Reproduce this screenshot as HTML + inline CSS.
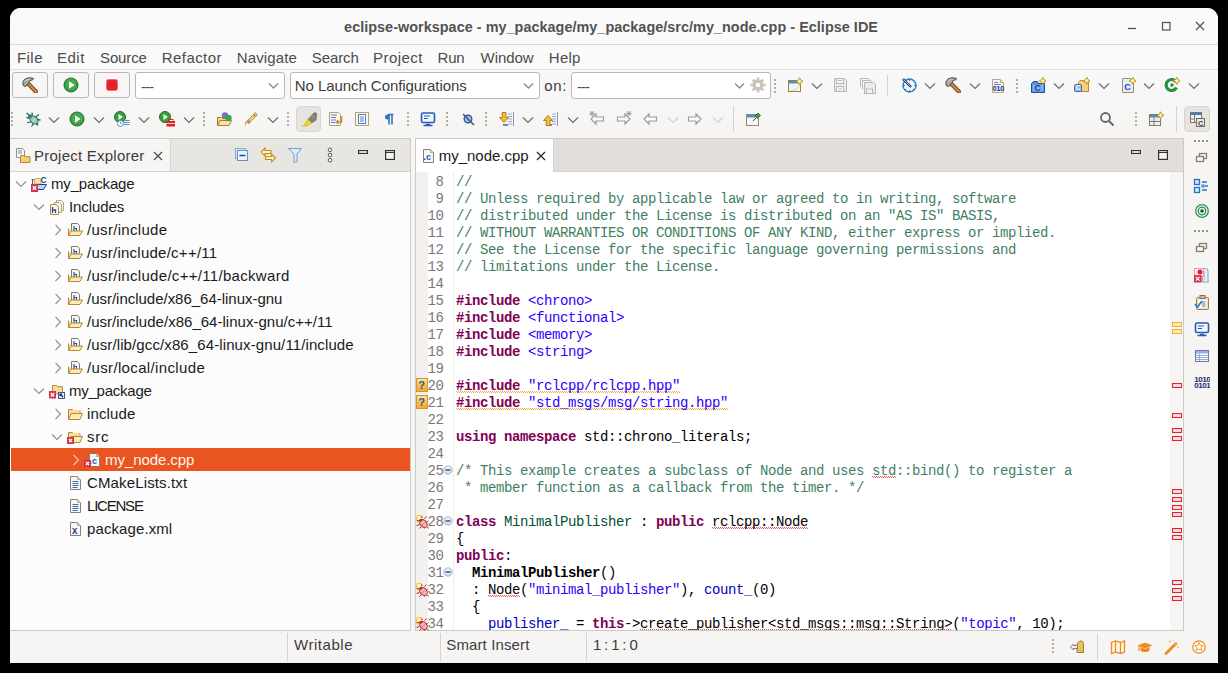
<!DOCTYPE html><html><head><meta charset="utf-8"><style>
*{box-sizing:border-box;margin:0;padding:0}
html,body{width:1228px;height:673px;overflow:hidden;background:#000}
body{position:relative;font-family:"Liberation Sans",sans-serif;}
.a{position:absolute}
.t{position:absolute;white-space:pre;line-height:1}
.win{position:absolute;left:10px;top:8px;width:1208px;height:655px;background:#f6f5f4;border-radius:11px 11px 0 0;overflow:hidden}
.menu{font-size:15px;color:#4c4c4c}
.code{font-family:"Liberation Mono",monospace;font-size:14px;letter-spacing:-0.4px}
.ln{font-family:"Liberation Mono",monospace;font-size:14px;letter-spacing:-0.4px;color:#787878;text-align:right;width:40px}
.c{color:#3f7f5f}.k{color:#7f0055;font-weight:bold}.s{color:#2a00ff}.f{color:#0000c0}.cl{color:#005032}
.sq{background-image:repeating-linear-gradient(90deg,#ec5a5a 0 1px,transparent 1px 2px),repeating-linear-gradient(90deg,transparent 0 1px,#ec5a5a 1px 2px);background-size:100% 1px,100% 1px;background-position:0 13px,0 14px;background-repeat:no-repeat}
.sqy{background-image:repeating-linear-gradient(90deg,#f4b040 0 1px,transparent 1px 2px),repeating-linear-gradient(90deg,transparent 0 1px,#f4b040 1px 2px);background-size:100% 1px,100% 1px;background-position:0 13px,0 14px;background-repeat:no-repeat}
.tree{font-size:15px;color:#1a1a1a}
.btn{position:absolute;border:1px solid #b8b8b8;border-radius:3px;background:#f8f7f6}
.combo{position:absolute;border:1px solid #b8b8b8;border-radius:3px;background:#fff}
.chev{position:absolute;width:7px;height:7px;border-right:1.3px solid #707070;border-bottom:1.3px solid #707070;transform:rotate(45deg)}
.dots{position:absolute;width:2px;height:14px;background:repeating-linear-gradient(#b8ab98 0 2px,transparent 2px 4px)}
.vsep{position:absolute;width:1px;background:#d6d3cf}
</style></head><body>
<div class="win"></div>
<div class="a" style="left:10px;top:8px;width:1208px;height:36px;background:#fafafa;border-radius:11px 11px 0 0"></div>
<div class="a" style="left:10px;top:44px;width:1208px;height:1px;background:#d9d9d9"></div>
<div class="t" style="left:344.1px;top:20px;font-size:14.4px;font-weight:bold;color:#525252;letter-spacing:0.039px">eclipse-workspace - my_package/my_package/src/my_node.cpp - Eclipse IDE</div>
<div class="a" style="left:10px;top:45px;width:1208px;height:24px;background:#fafafa"></div>
<div class="a" style="left:10px;top:69px;width:1208px;height:1px;background:#e2e0dd"></div>
<div class="t menu" style="left:17px;top:50px;letter-spacing:0.433px">File</div>
<div class="t menu" style="left:57.1px;top:50px;letter-spacing:0.467px">Edit</div>
<div class="t menu" style="left:100.1px;top:50px;letter-spacing:-0.160px">Source</div>
<div class="t menu" style="left:161.8px;top:50px;letter-spacing:0.414px">Refactor</div>
<div class="t menu" style="left:236.8px;top:50px;letter-spacing:0.129px">Navigate</div>
<div class="t menu" style="left:311.8px;top:50px;letter-spacing:-0.100px">Search</div>
<div class="t menu" style="left:373px;top:50px;letter-spacing:0.450px">Project</div>
<div class="t menu" style="left:437.6px;top:50px;letter-spacing:-0.300px">Run</div>
<div class="t menu" style="left:480.6px;top:50px;letter-spacing:-0.060px">Window</div>
<div class="t menu" style="left:548.8px;top:50px;letter-spacing:0.267px">Help</div>
<div class="a" style="left:10px;top:70px;width:1208px;height:68px;background:linear-gradient(#f8f8f8,#f6f5f4)"></div>
<div class="btn" style="left:12px;top:72px;width:36px;height:26px"></div>
<div class="btn" style="left:53px;top:72px;width:36px;height:26px"></div>
<div class="btn" style="left:94px;top:72px;width:36px;height:26px"></div>
<svg class="a" style="left:21.5px;top:76.5px" width="16" height="16" viewBox="0 0 16 16"><path d="M6 6.5l7.8 8" stroke="#7a4a18" stroke-width="4.2" stroke-linecap="round"/><path d="M6 6.5l7.8 8" stroke="#c48a4a" stroke-width="2.4" stroke-linecap="round"/><path d="M0.8 5.5C1.3 2.5 4.3 0.8 8 0.8L11.5 1.4L10.5 3L8.2 3.4L7 5.6L3.6 9.6L1.2 8.6Z" fill="#a8a8a8" stroke="#4a4a4a" stroke-width="1"/><path d="M3 4.5C4 3 6 2.2 8 2.2" fill="none" stroke="#d8d8d8" stroke-width="0.9"/></svg>
<svg class="a" style="left:63.0px;top:77.0px" width="16" height="16" viewBox="0 0 16 16"><circle cx="8" cy="8" r="7.0" fill="#3aa040" stroke="#1f6a28" stroke-width="1"/><circle cx="8" cy="7" r="5.5" fill="#4cb050" opacity="0.6"/><path d="M6 4.2v7.6l5.6-3.8z" fill="#fff"/></svg>
<svg class="a" style="left:104.0px;top:77.0px" width="16" height="16" viewBox="0 0 16 16"><rect x="2.5" y="2.5" width="11" height="11" rx="2" fill="#e8202a" stroke="#f07080" stroke-width="1"/></svg>
<div class="combo" style="left:135px;top:72px;width:150px;height:27px"></div>
<div class="t" style="left:141px;top:79px;font-size:15px;color:#4a4a4a;letter-spacing:-1px">---</div>
<svg class="a" style="left:267.5px;top:81.5px" width="11" height="8" viewBox="0 0 11 8"><polyline points="1,1.5 5.5,6.0 10,1.5" fill="none" stroke="#8a8a8a" stroke-width="1.3"/></svg>
<div class="combo" style="left:290px;top:72px;width:250px;height:27px"></div>
<div class="t" style="left:294.8px;top:78px;font-size:15px;color:#3c3c3c;letter-spacing:-0.065px">No Launch Configurations</div>
<svg class="a" style="left:522.5px;top:81.5px" width="11" height="8" viewBox="0 0 11 8"><polyline points="1,1.5 5.5,6.0 10,1.5" fill="none" stroke="#8a8a8a" stroke-width="1.3"/></svg>
<div class="t" style="left:544.2px;top:78px;font-size:15px;color:#3c3c3c;letter-spacing:0.65px">on:</div>
<div class="combo" style="left:571px;top:72px;width:200px;height:27px"></div>
<div class="t" style="left:577px;top:79px;font-size:15px;color:#4a4a4a;letter-spacing:-1px">---</div>
<svg class="a" style="left:734.0px;top:81.5px" width="11" height="8" viewBox="0 0 11 8"><polyline points="1,1.5 5.5,6.0 10,1.5" fill="none" stroke="#8a8a8a" stroke-width="1.3"/></svg>
<svg class="a" style="left:749.5px;top:77.0px" width="16" height="16" viewBox="0 0 16 16"><circle cx="8" cy="8" r="5.5" fill="#c8c4b8"/><path d="M8 0.5v15M0.5 8h15M2.7 2.7l10.6 10.6M13.3 2.7l-10.6 10.6" stroke="#c8c4b8" stroke-width="2.6"/><circle cx="8" cy="8" r="2.3" fill="#fff"/></svg>
<div class="dots" style="left:774px;top:79px"></div>
<svg class="a" style="left:786.5px;top:77.0px" width="16" height="16" viewBox="0 0 16 16"><rect x="1.5" y="3.5" width="12" height="11" fill="#eef6fc" stroke="#9a8040"/><rect x="2" y="4" width="11" height="2.5" fill="#4a90d0"/><path d="M4 13.5c5 0 8-3 9.5-8" fill="none" stroke="#f0e0a0" stroke-width="1.2"/><path d="M12.5 0.8l1.2 2.3 2.3 1.2-2.3 1.2-1.2 2.3-1.2-2.3-2.3-1.2 2.3-1.2z" fill="#fff3b0" stroke="#c09020" stroke-width="1"/></svg>
<svg class="a" style="left:811.0px;top:81.5px" width="12" height="8" viewBox="0 0 12 8"><polyline points="1,1.5 6.0,6.5 11,1.5" fill="none" stroke="#6e6e6e" stroke-width="1.2"/></svg>
<svg class="a" style="left:832.0px;top:77.0px" width="16" height="16" viewBox="0 0 16 16"><path d="M2.5 1.5h10l2 2v11h-12z" fill="#ececec" stroke="#b8b8b8" stroke-width="1"/><rect x="4.5" y="1.5" width="7" height="5" fill="#f4f4f4" stroke="#b8b8b8"/><path d="M6 3.5h4" stroke="#b8b8b8"/><rect x="4.5" y="9.5" width="7" height="5" fill="#f4f4f4" stroke="#b8b8b8"/><path d="M8 11v2.5" stroke="#b8b8b8"/></svg>
<svg class="a" style="left:859.5px;top:77.5px" width="16" height="16" viewBox="0 0 16 16"><path d="M0.5 0.5h8l1.5 1.5" fill="none" stroke="#b8b8b8"/><path d="M0.5 0.5v8" stroke="#b8b8b8"/><path d="M2.5 2.5h8l1.5 1.5" fill="none" stroke="#b8b8b8"/><path d="M2.5 2.5v9" stroke="#b8b8b8"/><path d="M4.5 4.5h9l2 2v9h-11z" fill="#ececec" stroke="#b8b8b8"/><rect x="6.5" y="11" width="6" height="4.5" fill="#f4f4f4" stroke="#b8b8b8"/></svg>
<div class="vsep" style="left:887px;top:75px;height:21px"></div>
<svg class="a" style="left:900.5px;top:77.0px" width="16" height="16" viewBox="0 0 16 16"><circle cx="8.5" cy="8.5" r="6.5" fill="#f0f6fc" stroke="#2a7ac8" stroke-width="1.4"/><path d="M8.5 2v2M8.5 13v2M2 8.5h2M13 8.5h2M4 4l1.2 1.2M13 13l-1.2-1.2M4 13l1.2-1.2" stroke="#2a7ac8" stroke-width="1"/><path d="M2 2l8 8" stroke="#1a3a80" stroke-width="2.4"/><path d="M2.5 2.5l7 7" stroke="#e8d060" stroke-width="0.9"/></svg>
<svg class="a" style="left:924.0px;top:81.5px" width="12" height="8" viewBox="0 0 12 8"><polyline points="1,1.5 6.0,6.5 11,1.5" fill="none" stroke="#6e6e6e" stroke-width="1.2"/></svg>
<svg class="a" style="left:944.5px;top:77.0px" width="16" height="16" viewBox="0 0 16 16"><path d="M6 6.5l7.8 8" stroke="#7a4a18" stroke-width="4.2" stroke-linecap="round"/><path d="M6 6.5l7.8 8" stroke="#c48a4a" stroke-width="2.4" stroke-linecap="round"/><path d="M0.8 5.5C1.3 2.5 4.3 0.8 8 0.8L11.5 1.4L10.5 3L8.2 3.4L7 5.6L3.6 9.6L1.2 8.6Z" fill="#a8a8a8" stroke="#4a4a4a" stroke-width="1"/><path d="M3 4.5C4 3 6 2.2 8 2.2" fill="none" stroke="#d8d8d8" stroke-width="0.9"/></svg>
<svg class="a" style="left:969.0px;top:81.5px" width="12" height="8" viewBox="0 0 12 8"><polyline points="1,1.5 6.0,6.5 11,1.5" fill="none" stroke="#6e6e6e" stroke-width="1.2"/></svg>
<svg class="a" style="left:990.5px;top:77.5px" width="16" height="16" viewBox="0 0 16 16"><path d="M1.5 1.5h8l3 3v10h-11z" fill="#f4f8fc" stroke="#b8a878"/><path d="M9.5 1.5v3h3" fill="#f0dca0" stroke="#c8b070"/><path d="M3 4.5h4M3 6.5h7" stroke="#6a8ac8" stroke-width="1"/><text x="1.8" y="13" font-family="Liberation Sans" font-weight="bold" font-size="7" fill="#102a6a" letter-spacing="-0.2">010</text></svg>
<div class="dots" style="left:1016px;top:79px"></div>
<svg class="a" style="left:1029.5px;top:77.0px" width="16" height="16" viewBox="0 0 16 16"><path d="M1.5 6.5l2-2h4l1 2h6v9h-13z" fill="#5a8ed8" stroke="#2a4a90"/><rect x="2.5" y="7.5" width="11" height="7" fill="#7ab0f0"/><text x="4.5" y="14" font-family="Liberation Sans" font-weight="bold" font-size="8.5" fill="#1a3a90">C</text><path d="M12.8 0.3l1.2 2.3 2.3 1.2-2.3 1.2-1.2 2.3-1.2-2.3-2.3-1.2 2.3-1.2z" fill="#fff3b0" stroke="#c09020" stroke-width="1"/></svg>
<svg class="a" style="left:1053.0px;top:81.5px" width="12" height="8" viewBox="0 0 12 8"><polyline points="1,1.5 6.0,6.5 11,1.5" fill="none" stroke="#6e6e6e" stroke-width="1.2"/></svg>
<svg class="a" style="left:1074.0px;top:77.0px" width="16" height="16" viewBox="0 0 16 16"><path d="M4.5 5.5l1.5-2h3.5l1 1.5h4v9.5h-10z" fill="#f5d080" stroke="#b88a3a"/><rect x="0.5" y="7.5" width="7" height="7" rx="1" fill="#8ab4e8" stroke="#4a6aa8"/><text x="1.8" y="13.3" font-family="Liberation Sans" font-weight="bold" font-size="6.5" fill="#fff">C</text><path d="M12.8 0.3l1.2 2.3 2.3 1.2-2.3 1.2-1.2 2.3-1.2-2.3-2.3-1.2 2.3-1.2z" fill="#fff3b0" stroke="#c09020" stroke-width="1"/></svg>
<svg class="a" style="left:1098.0px;top:81.5px" width="12" height="8" viewBox="0 0 12 8"><polyline points="1,1.5 6.0,6.5 11,1.5" fill="none" stroke="#6e6e6e" stroke-width="1.2"/></svg>
<svg class="a" style="left:1119.5px;top:77.0px" width="16" height="16" viewBox="0 0 16 16"><path d="M2.5 1.5h8v1h3v13h-11z" fill="#e4eef8" stroke="#9a9070"/><text x="4.2" y="12.5" font-family="Liberation Sans" font-weight="bold" font-size="9" fill="#2a3ac0">C</text><path d="M12.8 0.3l1.2 2.3 2.3 1.2-2.3 1.2-1.2 2.3-1.2-2.3-2.3-1.2 2.3-1.2z" fill="#fff3b0" stroke="#c09020" stroke-width="1"/></svg>
<svg class="a" style="left:1143.0px;top:81.5px" width="12" height="8" viewBox="0 0 12 8"><polyline points="1,1.5 6.0,6.5 11,1.5" fill="none" stroke="#6e6e6e" stroke-width="1.2"/></svg>
<svg class="a" style="left:1163.5px;top:77.0px" width="16" height="16" viewBox="0 0 16 16"><path d="M12.5 10.5a5.5 5.5 0 1 1 0-5" fill="none" stroke="#2a9040" stroke-width="3.2"/><circle cx="8" cy="8" r="1.8" fill="#2a9040"/><path d="M12.8 0.3l1.2 2.3 2.3 1.2-2.3 1.2-1.2 2.3-1.2-2.3-2.3-1.2 2.3-1.2z" fill="#fff3b0" stroke="#c09020" stroke-width="1"/></svg>
<svg class="a" style="left:1188.0px;top:81.5px" width="12" height="8" viewBox="0 0 12 8"><polyline points="1,1.5 6.0,6.5 11,1.5" fill="none" stroke="#6e6e6e" stroke-width="1.2"/></svg>
<div class="dots" style="left:11px;top:112px"></div>
<svg class="a" style="left:24.5px;top:111.0px" width="16" height="16" viewBox="0 0 16 16"><path d="M6 7.5L1.5 6.5M6.5 10.5L2 12M8.5 12.5L6.5 15.5M7.5 5.5L7 1.5M10.5 6L14 3.5M11.5 8.5L15.5 9M10.5 11L13 14.5M4.5 4.5L1.5 2" stroke="#2a6a6a" stroke-width="1.3"/><ellipse cx="9" cy="9" rx="3.4" ry="4.6" transform="rotate(-45 9 9)" fill="#9ccca8" stroke="#2a6a6a" stroke-width="1.1"/><path d="M7.5 10.5L10.5 7.5" stroke="#d8f0e0" stroke-width="1"/><circle cx="5.2" cy="5.2" r="1.9" fill="#3a7a7a"/></svg>
<svg class="a" style="left:48.0px;top:115.5px" width="12" height="8" viewBox="0 0 12 8"><polyline points="1,1.5 6.0,6.5 11,1.5" fill="none" stroke="#6e6e6e" stroke-width="1.2"/></svg>
<svg class="a" style="left:69.0px;top:111.0px" width="16" height="16" viewBox="0 0 16 16"><circle cx="8" cy="8" r="7.0" fill="#3aa040" stroke="#1f6a28" stroke-width="1"/><circle cx="8" cy="7" r="5.5" fill="#4cb050" opacity="0.6"/><path d="M6 4.2v7.6l5.6-3.8z" fill="#fff"/></svg>
<svg class="a" style="left:93.0px;top:115.5px" width="12" height="8" viewBox="0 0 12 8"><polyline points="1,1.5 6.0,6.5 11,1.5" fill="none" stroke="#6e6e6e" stroke-width="1.2"/></svg>
<svg class="a" style="left:114.0px;top:111.0px" width="16" height="16" viewBox="0 0 16 16"><circle cx="6" cy="6" r="5.5" fill="#3aa040" stroke="#1f6a28"/><path d="M4.5 3v6l4.3-3z" fill="#fff"/><circle cx="6.5" cy="12.5" r="3" fill="#fff" stroke="#5a8ad0"/><path d="M6.5 10.5v2h1.5" fill="none" stroke="#5a8ad0" stroke-width="0.8"/><path d="M10 9.5h5.5M10 11.5h5.5M10 13.5h5.5" stroke="#5a8ad0" stroke-width="1"/></svg>
<svg class="a" style="left:138.0px;top:115.5px" width="12" height="8" viewBox="0 0 12 8"><polyline points="1,1.5 6.0,6.5 11,1.5" fill="none" stroke="#6e6e6e" stroke-width="1.2"/></svg>
<svg class="a" style="left:158.5px;top:111.0px" width="16" height="16" viewBox="0 0 16 16"><circle cx="6" cy="6" r="5.5" fill="#3aa040" stroke="#1f6a28"/><path d="M4.5 3v6l4.3-3z" fill="#fff"/><rect x="7.5" y="10" width="8.5" height="5.5" fill="#e02020"/><rect x="9.5" y="8.5" width="4.5" height="2" fill="none" stroke="#e02020"/><path d="M7.5 12.5h8.5" stroke="#fff" stroke-width="0.8"/></svg>
<svg class="a" style="left:183.0px;top:115.5px" width="12" height="8" viewBox="0 0 12 8"><polyline points="1,1.5 6.0,6.5 11,1.5" fill="none" stroke="#6e6e6e" stroke-width="1.2"/></svg>
<div class="dots" style="left:203px;top:112px"></div>
<svg class="a" style="left:215.5px;top:111.0px" width="16" height="16" viewBox="0 0 16 16"><path d="M1.5 6.5h4l1 1h6v7h-11z" fill="#f5d890" stroke="#a87a30"/><path d="M1.5 14.5l2.5-5h11.5l-2.5 5z" fill="#fce4a0" stroke="#a87a30"/><circle cx="9" cy="4.5" r="3.2" fill="#7a70c8"/><circle cx="12.5" cy="7" r="3.2" fill="#40a050"/></svg>
<svg class="a" style="left:242.5px;top:111.0px" width="16" height="16" viewBox="0 0 16 16"><path d="M3 15L2.5 11.5L10.5 3.5L12 1.5L14.5 4L12.5 5.5L4.5 13.5z" fill="#f4d070" stroke="#b88a30" stroke-width="0.9"/><path d="M4.5 9.5l2.5 2.5" stroke="#9a9a9a" stroke-width="3"/><path d="M3 15l2-2" stroke="#fffbe0" stroke-width="2"/><circle cx="11.5" cy="4.5" r="0.8" fill="#3a5aa0"/></svg>
<svg class="a" style="left:267.0px;top:115.5px" width="12" height="8" viewBox="0 0 12 8"><polyline points="1,1.5 6.0,6.5 11,1.5" fill="none" stroke="#6e6e6e" stroke-width="1.2"/></svg>
<div class="dots" style="left:287px;top:112px"></div>
<div class="a" style="left:295.5px;top:106px;width:25.5px;height:25.5px;border-radius:4px;background:#e6e4e1;border:1px solid #d8d5d1"></div>
<svg class="a" style="left:300.5px;top:111.0px" width="16" height="16" viewBox="0 0 16 16"><path d="M7 8.5L13.5 1.5L15.5 2.5L15 9L10.5 12z" fill="#8a8272" stroke="#6e6656" stroke-width="0.8"/><path d="M10 3.5l3.5 4" stroke="#b0a890" stroke-width="0.8"/><path d="M3.5 14L7 8.5L10.5 12L6 14.5z" fill="#f4dc30" stroke="#d0b000" stroke-width="0.8"/><path d="M0.5 14.8h6.5" stroke="#e0c000" stroke-width="1"/></svg>
<svg class="a" style="left:327.5px;top:111.0px" width="16" height="16" viewBox="0 0 16 16"><path d="M1.5 1.5h9l2 2v11h-11z" fill="#f8f8f4" stroke="#b8a070"/><path d="M3 4h6M3 6.5h5M3 9h5M3 11.5h4" stroke="#5a7ac0"/><path d="M13.5 5v6h-5l1.8-1.8M8.5 11l1.8 1.8" fill="none" stroke="#c09020" stroke-width="1.6"/></svg>
<svg class="a" style="left:354.0px;top:111.0px" width="16" height="16" viewBox="0 0 16 16"><rect x="1.5" y="1.5" width="13" height="13" fill="#f8f8f4" stroke="#b8a070"/><rect x="4.5" y="3.5" width="7" height="9" fill="#fff" stroke="#5a7ac0"/><path d="M6 6h4M6 8h4M6 10h4" stroke="#5a7ac0"/></svg>
<svg class="a" style="left:381.0px;top:111.0px" width="16" height="16" viewBox="0 0 16 16"><path d="M8.5 3.5h-2a2.5 2.5 0 0 0 0 5h2z" fill="#3a70b8"/><path d="M8 3.5v10M11 3.5v10M7 3.5h5.5" stroke="#3a70b8" stroke-width="1.6"/></svg>
<div class="dots" style="left:407px;top:112px"></div>
<svg class="a" style="left:420.0px;top:111.0px" width="16" height="16" viewBox="0 0 16 16"><rect x="1.5" y="2" width="13" height="9.5" rx="1.5" fill="#f0f6ff" stroke="#2a5ab0" stroke-width="1.6"/><path d="M4 5h6M4 7.5h4" stroke="#2a5ab0" stroke-width="1.2"/><path d="M6 13.5h4M3.5 14.5h9" stroke="#2a5ab0" stroke-width="1.6"/></svg>
<div class="dots" style="left:446px;top:112px"></div>
<svg class="a" style="left:459.5px;top:111.0px" width="16" height="16" viewBox="0 0 16 16"><circle cx="8" cy="8" r="3.8" fill="#a0c0e8" stroke="#3a5a90" stroke-width="1.4"/><path d="M3 3l11 11" stroke="#3a5a90" stroke-width="1.6"/></svg>
<div class="dots" style="left:485px;top:112px"></div>
<svg class="a" style="left:498.5px;top:111.0px" width="16" height="16" viewBox="0 0 16 16"><path d="M14.5 1v14" stroke="#8a98b8"/><path d="M9 3h4M9 5.5h4M9 8h4M9 10.5h4M9 13h4" stroke="#8aa0c8" stroke-width="0.9"/><path d="M4 14h5" stroke="#3a5aa0" stroke-width="1.4"/><path d="M3 1.5h4v5h2.5l-4.5 5-4.5-5h3z" fill="#f5c030" stroke="#b08020"/></svg>
<svg class="a" style="left:522.0px;top:115.5px" width="12" height="8" viewBox="0 0 12 8"><polyline points="1,1.5 6.0,6.5 11,1.5" fill="none" stroke="#6e6e6e" stroke-width="1.2"/></svg>
<svg class="a" style="left:542.5px;top:111.0px" width="16" height="16" viewBox="0 0 16 16"><path d="M14.5 1v14" stroke="#8a98b8"/><path d="M9 3h4M9 5.5h4M9 8h4M9 10.5h4M9 13h4" stroke="#8aa0c8" stroke-width="0.9"/><path d="M4 14h5" stroke="#3a5aa0" stroke-width="1.4"/><path d="M3 14.5h4v-5h2.5l-4.5-5-4.5 5h3z" fill="#f5c030" stroke="#b08020"/></svg>
<svg class="a" style="left:567.0px;top:115.5px" width="12" height="8" viewBox="0 0 12 8"><polyline points="1,1.5 6.0,6.5 11,1.5" fill="none" stroke="#6e6e6e" stroke-width="1.2"/></svg>
<svg class="a" style="left:588.5px;top:111.0px" width="16" height="16" viewBox="0 0 16 16"><path d="M2 8l5-5v3h7.5v4h-7.5v3z" fill="#fbfbfb" stroke="#9a9a9a" stroke-width="1.2"/><path d="M0.5 2.5h5M3 0v5M1 0.5l4 4M5 0.5l-4 4" stroke="#9a9a9a" stroke-width="1"/></svg>
<svg class="a" style="left:615.5px;top:111.0px" width="16" height="16" viewBox="0 0 16 16"><path d="M14 8l-5-5v3h-7.5v4h7.5v3z" fill="#fbfbfb" stroke="#9a9a9a" stroke-width="1.2"/><path d="M10.5 2.5h5M13 0v5M11 0.5l4 4M15 0.5l-4 4" stroke="#9a9a9a" stroke-width="1"/></svg>
<svg class="a" style="left:641.5px;top:111.0px" width="16" height="16" viewBox="0 0 16 16"><path d="M2 8l5-5v3h7.5v4h-7.5v3z" fill="#fbfbfb" stroke="#9a9a9a" stroke-width="1.2"/></svg>
<svg class="a" style="left:666.5px;top:115.5px" width="12" height="8" viewBox="0 0 12 8"><polyline points="1,1.5 6.0,6.5 11,1.5" fill="none" stroke="#d0d0d0" stroke-width="1.2"/></svg>
<svg class="a" style="left:686.5px;top:111.0px" width="16" height="16" viewBox="0 0 16 16"><path d="M14 8l-5-5v3h-7.5v4h7.5v3z" fill="#fbfbfb" stroke="#9a9a9a" stroke-width="1.2"/></svg>
<svg class="a" style="left:711.5px;top:115.5px" width="12" height="8" viewBox="0 0 12 8"><polyline points="1,1.5 6.0,6.5 11,1.5" fill="none" stroke="#d0d0d0" stroke-width="1.2"/></svg>
<div class="vsep" style="left:733px;top:106px;height:26px"></div>
<svg class="a" style="left:745.0px;top:111.0px" width="16" height="16" viewBox="0 0 16 16"><rect x="1.5" y="3.5" width="12" height="11" fill="#f4f8fc" stroke="#9a8a60"/><rect x="2" y="4" width="11" height="2.5" fill="#4a90d0"/><path d="M8 10l3.5-3.5" stroke="#2a6a2a" stroke-width="1"/><path d="M10 5l3-3 2.5 2.5-3 3z" fill="#40a040" stroke="#206020" stroke-width="0.8"/></svg>
<svg class="a" style="left:1098.5px;top:111.0px" width="16" height="16" viewBox="0 0 16 16"><circle cx="6.5" cy="6.5" r="4.5" fill="none" stroke="#666" stroke-width="1.8"/><path d="M10 10l4.5 4.5" stroke="#666" stroke-width="2"/></svg>
<div class="dots" style="left:1135px;top:112px"></div>
<svg class="a" style="left:1147.5px;top:111.0px" width="16" height="16" viewBox="0 0 16 16"><rect x="1.5" y="3.5" width="11" height="11" fill="#e8f0f8" stroke="#8a7a50"/><rect x="2" y="4" width="10" height="2.5" fill="#4a90d0"/><path d="M6 6.5v8M1.5 10.5h11" stroke="#8a7a50"/><path d="M12.5 0.8l1.2 2.3 2.3 1.2-2.3 1.2-1.2 2.3-1.2-2.3-2.3-1.2 2.3-1.2z" fill="#fff3b0" stroke="#c09020" stroke-width="1"/></svg>
<div class="vsep" style="left:1176px;top:106px;height:26px"></div>
<div class="a" style="left:1184px;top:106px;width:26px;height:26px;border-radius:4px;background:#e6e4e1;border:1px solid #d8d5d1"></div>
<svg class="a" style="left:1189.0px;top:111.0px" width="16" height="16" viewBox="0 0 16 16"><rect x="1.5" y="1.5" width="11" height="10" fill="#eef4fa" stroke="#8a7a50"/><rect x="2" y="2" width="10" height="2" fill="#3a80d0"/><path d="M5.5 4v7.5M1.5 8h4" stroke="#8a7a50"/><rect x="7.5" y="7.5" width="8" height="8" fill="#dce8f4" stroke="#8a6a30"/><text x="9" y="14.5" font-family="Liberation Sans" font-weight="bold" font-size="7.5" fill="#1a4aa0">C</text></svg>
<div class="a" style="left:10px;top:138px;width:401px;height:493px;border:1px solid #cdc9c5;border-left:none;background:#fcfcfc"></div>
<div class="a" style="left:10px;top:139px;width:400px;height:33px;background:#e8e6e3;border-bottom:1px solid #d6d2ce"></div>
<div class="a" style="left:10px;top:139px;width:161px;height:32px;background:#f6f5f4;border-right:1px solid #d6d2ce"></div>
<div class="t" style="left:34px;top:148px;font-size:15px;color:#3c3c3c;letter-spacing:0.24px">Project Explorer</div>
<div class="a" style="left:415px;top:138px;width:769px;height:493px;border:1px solid #cdc9c5;background:#fff"></div>
<div class="a" style="left:416px;top:139px;width:767px;height:33px;background:#e1dedb;border-bottom:1px solid #d6d2ce"></div>
<div class="a" style="left:416px;top:139px;width:138px;height:33px;background:#fff;border-right:1px solid #d6d2ce"></div>
<div class="t" style="left:438.8px;top:148px;font-size:15px;color:#1a1a1a;letter-spacing:-0.03px">my_node.cpp</div>
<div class="a" style="left:416px;top:172px;width:12px;height:458px;background:#f3f1ef"></div>
<div class="a" style="left:1170px;top:172px;width:13px;height:458px;background:#f6f5f4"></div>
<div class="vsep" style="left:287px;top:633px;height:28px"></div>
<div class="vsep" style="left:440px;top:633px;height:28px"></div>
<div class="vsep" style="left:586px;top:633px;height:28px"></div>
<div class="t" style="left:294px;top:637px;font-size:15px;color:#3c3c3c;letter-spacing:0.54px">Writable</div>
<div class="t" style="left:446.3px;top:637px;font-size:15px;color:#3c3c3c;letter-spacing:0.12px">Smart Insert</div>
<div class="t" style="left:592.9px;top:637px;font-size:15px;color:#3c3c3c;letter-spacing:-0.65px">1 : 1 : 0</div>
<svg class="a" style="left:15.0px;top:180px" width="12" height="8" viewBox="0 0 12 8"><polyline points="1,1.5 6.0,6.5 11,1.5" fill="none" stroke="#8f8f8f" stroke-width="1.1"/></svg>
<svg class="a" style="left:31px;top:176px" width="16" height="16" viewBox="0 0 16 16"><path d="M0.5 3.5h3.5" stroke="#7a6a8a" stroke-width="1"/><path d="M1.5 3.5v5" stroke="#3a5aa0" stroke-width="1"/><path d="M3.5 8v-4l1-1.5h4.5l1 1.5v4z" fill="#fbe4a0" stroke="#d8a850" stroke-width="1"/><path d="M6.5 8.5h9l-3 5h-6z" fill="#b0dcf8" stroke="#2a40a0" stroke-width="1"/><text x="9.5" y="7" font-family="Liberation Sans" font-weight="bold" font-size="8.5" fill="#1a4a8a">C</text><rect x="0" y="8" width="7" height="8" fill="#d9314a"/><path d="M1.8 10.2L5.2 13.8M5.2 10.2L1.8 13.8" stroke="#fff" stroke-width="1.4"/></svg>
<div class="t tree" style="left:51px;top:176px;color:#1a1a1a;letter-spacing:-0.156px">my_package</div>
<svg class="a" style="left:33.0px;top:203px" width="12" height="8" viewBox="0 0 12 8"><polyline points="1,1.5 6.0,6.5 11,1.5" fill="none" stroke="#8f8f8f" stroke-width="1.1"/></svg>
<svg class="a" style="left:49px;top:199px" width="16" height="16" viewBox="0 0 16 16"><path d="M7.5 1.5h5l2 2v8h-7z" fill="#f4f8fc" stroke="#b8a070"/><path d="M5.5 3.5h5l2 2v8h-7z" fill="#f4f8fc" stroke="#b8a070"/><path d="M1.5 5.5h6l2 2v8h-8z" fill="#f4f8fc" stroke="#b8873a"/><path d="M3.5 8v6M3.5 11h3v3" fill="none" stroke="#2a4a80" stroke-width="1.3"/></svg>
<div class="t tree" style="left:69px;top:199px;color:#1a1a1a;letter-spacing:-0.071px">Includes</div>
<svg class="a" style="left:53.5px;top:224.0px" width="8" height="12" viewBox="0 0 8 12"><polyline points="1.5,1 6.5,6.0 1.5,11" fill="none" stroke="#8f8f8f" stroke-width="1.1"/></svg>
<svg class="a" style="left:67px;top:222px" width="16" height="16" viewBox="0 0 16 16"><path d="M1.5 6.5v7h11" fill="#f5dc9a" stroke="#b8873a"/><path d="M4.5 1.5h6l2 2v8h-8z" fill="#f4f8fc" stroke="#8a7a5a"/><path d="M7 4v5M7 6.5h2.5v2.5" fill="none" stroke="#2a5aa0" stroke-width="1.2"/><path d="M1.5 13.5l2.6-4.5h11.4l-2.6 4.5z" fill="#fcebb5" stroke="#b8873a"/></svg>
<div class="t tree" style="left:87px;top:222px;color:#1a1a1a;letter-spacing:0.300px">/usr/include</div>
<svg class="a" style="left:53.5px;top:247.0px" width="8" height="12" viewBox="0 0 8 12"><polyline points="1.5,1 6.5,6.0 1.5,11" fill="none" stroke="#8f8f8f" stroke-width="1.1"/></svg>
<svg class="a" style="left:67px;top:245px" width="16" height="16" viewBox="0 0 16 16"><path d="M1.5 6.5v7h11" fill="#f5dc9a" stroke="#b8873a"/><path d="M4.5 1.5h6l2 2v8h-8z" fill="#f4f8fc" stroke="#8a7a5a"/><path d="M7 4v5M7 6.5h2.5v2.5" fill="none" stroke="#2a5aa0" stroke-width="1.2"/><path d="M1.5 13.5l2.6-4.5h11.4l-2.6 4.5z" fill="#fcebb5" stroke="#b8873a"/></svg>
<div class="t tree" style="left:87px;top:245px;color:#1a1a1a;letter-spacing:0.250px">/usr/include/c++/11</div>
<svg class="a" style="left:53.5px;top:270.0px" width="8" height="12" viewBox="0 0 8 12"><polyline points="1.5,1 6.5,6.0 1.5,11" fill="none" stroke="#8f8f8f" stroke-width="1.1"/></svg>
<svg class="a" style="left:67px;top:268px" width="16" height="16" viewBox="0 0 16 16"><path d="M1.5 6.5v7h11" fill="#f5dc9a" stroke="#b8873a"/><path d="M4.5 1.5h6l2 2v8h-8z" fill="#f4f8fc" stroke="#8a7a5a"/><path d="M7 4v5M7 6.5h2.5v2.5" fill="none" stroke="#2a5aa0" stroke-width="1.2"/><path d="M1.5 13.5l2.6-4.5h11.4l-2.6 4.5z" fill="#fcebb5" stroke="#b8873a"/></svg>
<div class="t tree" style="left:87px;top:268px;color:#1a1a1a;letter-spacing:0.307px">/usr/include/c++/11/backward</div>
<svg class="a" style="left:53.5px;top:293.0px" width="8" height="12" viewBox="0 0 8 12"><polyline points="1.5,1 6.5,6.0 1.5,11" fill="none" stroke="#8f8f8f" stroke-width="1.1"/></svg>
<svg class="a" style="left:67px;top:291px" width="16" height="16" viewBox="0 0 16 16"><path d="M1.5 6.5v7h11" fill="#f5dc9a" stroke="#b8873a"/><path d="M4.5 1.5h6l2 2v8h-8z" fill="#f4f8fc" stroke="#8a7a5a"/><path d="M7 4v5M7 6.5h2.5v2.5" fill="none" stroke="#2a5aa0" stroke-width="1.2"/><path d="M1.5 13.5l2.6-4.5h11.4l-2.6 4.5z" fill="#fcebb5" stroke="#b8873a"/></svg>
<div class="t tree" style="left:87px;top:291px;color:#1a1a1a;letter-spacing:-0.018px">/usr/include/x86_64-linux-gnu</div>
<svg class="a" style="left:53.5px;top:316.0px" width="8" height="12" viewBox="0 0 8 12"><polyline points="1.5,1 6.5,6.0 1.5,11" fill="none" stroke="#8f8f8f" stroke-width="1.1"/></svg>
<svg class="a" style="left:67px;top:314px" width="16" height="16" viewBox="0 0 16 16"><path d="M1.5 6.5v7h11" fill="#f5dc9a" stroke="#b8873a"/><path d="M4.5 1.5h6l2 2v8h-8z" fill="#f4f8fc" stroke="#8a7a5a"/><path d="M7 4v5M7 6.5h2.5v2.5" fill="none" stroke="#2a5aa0" stroke-width="1.2"/><path d="M1.5 13.5l2.6-4.5h11.4l-2.6 4.5z" fill="#fcebb5" stroke="#b8873a"/></svg>
<div class="t tree" style="left:87px;top:314px;color:#1a1a1a;letter-spacing:0.020px">/usr/include/x86_64-linux-gnu/c++/11</div>
<svg class="a" style="left:53.5px;top:339.0px" width="8" height="12" viewBox="0 0 8 12"><polyline points="1.5,1 6.5,6.0 1.5,11" fill="none" stroke="#8f8f8f" stroke-width="1.1"/></svg>
<svg class="a" style="left:67px;top:337px" width="16" height="16" viewBox="0 0 16 16"><path d="M1.5 6.5v7h11" fill="#f5dc9a" stroke="#b8873a"/><path d="M4.5 1.5h6l2 2v8h-8z" fill="#f4f8fc" stroke="#8a7a5a"/><path d="M7 4v5M7 6.5h2.5v2.5" fill="none" stroke="#2a5aa0" stroke-width="1.2"/><path d="M1.5 13.5l2.6-4.5h11.4l-2.6 4.5z" fill="#fcebb5" stroke="#b8873a"/></svg>
<div class="t tree" style="left:87px;top:337px;color:#1a1a1a;letter-spacing:0.110px">/usr/lib/gcc/x86_64-linux-gnu/11/include</div>
<svg class="a" style="left:53.5px;top:362.0px" width="8" height="12" viewBox="0 0 8 12"><polyline points="1.5,1 6.5,6.0 1.5,11" fill="none" stroke="#8f8f8f" stroke-width="1.1"/></svg>
<svg class="a" style="left:67px;top:360px" width="16" height="16" viewBox="0 0 16 16"><path d="M1.5 6.5v7h11" fill="#f5dc9a" stroke="#b8873a"/><path d="M4.5 1.5h6l2 2v8h-8z" fill="#f4f8fc" stroke="#8a7a5a"/><path d="M7 4v5M7 6.5h2.5v2.5" fill="none" stroke="#2a5aa0" stroke-width="1.2"/><path d="M1.5 13.5l2.6-4.5h11.4l-2.6 4.5z" fill="#fcebb5" stroke="#b8873a"/></svg>
<div class="t tree" style="left:87px;top:360px;color:#1a1a1a;letter-spacing:0.353px">/usr/local/include</div>
<svg class="a" style="left:33.0px;top:387px" width="12" height="8" viewBox="0 0 12 8"><polyline points="1,1.5 6.0,6.5 11,1.5" fill="none" stroke="#8f8f8f" stroke-width="1.1"/></svg>
<svg class="a" style="left:49px;top:383px" width="16" height="16" viewBox="0 0 16 16"><path d="M3.5 2.5h4l1 1.2h5v7h-10z" fill="#f5dc9a" stroke="#b8873a"/><rect x="0" y="8" width="7" height="7.5" fill="#d9314a"/><path d="M1.8 10L5.2 13.5M5.2 10L1.8 13.5" stroke="#fff" stroke-width="1.4"/><rect x="9.5" y="9.5" width="6" height="6" fill="#dde8f4" stroke="#3a5a8a"/><path d="M11 11l3 3M11 11h2M11 11v2" stroke="#1a2a6a" stroke-width="1.2"/></svg>
<div class="t tree" style="left:69px;top:383px;color:#1a1a1a;letter-spacing:-0.244px">my_package</div>
<svg class="a" style="left:53.5px;top:408.0px" width="8" height="12" viewBox="0 0 8 12"><polyline points="1.5,1 6.5,6.0 1.5,11" fill="none" stroke="#8f8f8f" stroke-width="1.1"/></svg>
<svg class="a" style="left:67px;top:406px" width="16" height="16" viewBox="0 0 16 16"><path d="M1.5 3.5h4l1 1.2h6.5v3" fill="#f5dc9a" stroke="#b8873a" stroke-width="1"/><path d="M1.5 3.5v10h11.5" fill="#f5dc9a" stroke="#b8873a" stroke-width="1"/><rect x="2" y="4" width="10.5" height="9" fill="#f5dc9a"/><path d="M1.5 13.5l2.6-6h11.4l-2.6 6z" fill="#fcebb5" stroke="#b8873a" stroke-width="1"/></svg>
<div class="t tree" style="left:87px;top:406px;color:#1a1a1a;letter-spacing:0.133px">include</div>
<svg class="a" style="left:51.0px;top:433px" width="12" height="8" viewBox="0 0 12 8"><polyline points="1,1.5 6.0,6.5 11,1.5" fill="none" stroke="#8f8f8f" stroke-width="1.1"/></svg>
<svg class="a" style="left:67px;top:429px" width="16" height="16" viewBox="0 0 16 16"><path d="M1.5 3.5h4l1 1.2h6.5v3" fill="#f5dc9a" stroke="#b8873a" stroke-width="1"/><path d="M1.5 3.5v10h11.5" fill="#f5dc9a" stroke="#b8873a" stroke-width="1"/><rect x="2" y="4" width="10.5" height="9" fill="#f5dc9a"/><path d="M1.5 13.5l2.6-6h11.4l-2.6 6z" fill="#fcebb5" stroke="#b8873a" stroke-width="1"/></svg><svg class="a" style="left:67px;top:437px" width="7" height="7" viewBox="0 0 7 7"><rect x="0" y="0" width="7" height="7" fill="#d9314a"/><path d="M2 2L5 5M5 2L2 5" stroke="#fff" stroke-width="1.3"/></svg>
<div class="t tree" style="left:87px;top:429px;color:#1a1a1a;letter-spacing:0.800px">src</div>
<div class="a" style="left:11px;top:448px;width:399px;height:23px;background:#e95420"></div>
<svg class="a" style="left:71.5px;top:454.0px" width="8" height="12" viewBox="0 0 8 12"><polyline points="1.5,1 6.5,6.0 1.5,11" fill="none" stroke="#f7c8ae" stroke-width="1.1"/></svg>
<svg class="a" style="left:87px;top:452px" width="16" height="16" viewBox="0 0 16 16"><path d="M2.5 1.5h7l3 3v10h-10z" fill="#f4f8fc" stroke="#8a8060"/><path d="M9.5 1.5v3h3" fill="#e8dcc0" stroke="#c0a878"/><text x="5" y="12" font-family="Liberation Sans" font-weight="bold" font-size="9" fill="#2a5aa8">c</text><rect x="3" y="10.5" width="1.5" height="1.5" fill="#2a5aa8"/></svg><svg class="a" style="left:84px;top:460px" width="7" height="7" viewBox="0 0 7 7"><rect x="0" y="0" width="7" height="7" fill="#d9314a"/><path d="M2 2L5 5M5 2L2 5" stroke="#fff" stroke-width="1.3"/></svg>
<div class="t tree" style="left:105px;top:452px;color:#fff4ec;letter-spacing:-0.070px">my_node.cpp</div>
<svg class="a" style="left:68px;top:475px" width="16" height="16" viewBox="0 0 16 16"><path d="M2.5 1.5h7l3 3v10h-10z" fill="#f4f8fc" stroke="#8a8070"/><path d="M9.5 1.5v3h3" fill="#e8dcc0" stroke="#c0a878"/><path d="M4.5 6.5h6M4.5 8.5h6M4.5 10.5h6M4.5 12.5h5" stroke="#4a6ab0" stroke-width="1"/></svg>
<div class="t tree" style="left:87px;top:475px;color:#1a1a1a;letter-spacing:0.138px">CMakeLists.txt</div>
<svg class="a" style="left:68px;top:498px" width="16" height="16" viewBox="0 0 16 16"><path d="M2.5 1.5h7l3 3v10h-10z" fill="#f4f8fc" stroke="#8a8070"/><path d="M9.5 1.5v3h3" fill="#e8dcc0" stroke="#c0a878"/><path d="M4.5 6.5h6M4.5 8.5h6M4.5 10.5h6M4.5 12.5h5" stroke="#4a6ab0" stroke-width="1"/></svg>
<div class="t tree" style="left:87px;top:498px;color:#1a1a1a;letter-spacing:-1.217px">LICENSE</div>
<svg class="a" style="left:68px;top:521px" width="16" height="16" viewBox="0 0 16 16"><path d="M2.5 1.5h7l3 3v10h-10z" fill="#f4f8fc" stroke="#8a8070"/><path d="M9.5 1.5v3h3" fill="#e8dcc0" stroke="#c0a878"/><text x="4" y="12.5" font-family="Liberation Mono" font-weight="bold" font-size="9" fill="#2a3a6a">X</text></svg>
<div class="t tree" style="left:87px;top:521px;color:#1a1a1a;letter-spacing:0.100px">package.xml</div>
<div class="a" style="left:416px;top:172px;width:754px;height:458px;overflow:hidden">
<div class="t ln" style="left:-12.5px;top:3px">8</div>
<div class="t code" style="left:40px;top:3px;color:#000"><span class="c">//</span></div>
<div class="t ln" style="left:-12.5px;top:20px">9</div>
<div class="t code" style="left:40px;top:20px;color:#000"><span class="c">// Unless required by applicable law or agreed to in writing, software</span></div>
<div class="t ln" style="left:-12.5px;top:37px">10</div>
<div class="t code" style="left:40px;top:37px;color:#000"><span class="c">// distributed under the License is distributed on an "AS IS" BASIS,</span></div>
<div class="t ln" style="left:-12.5px;top:54px">11</div>
<div class="t code" style="left:40px;top:54px;color:#000"><span class="c">// WITHOUT WARRANTIES OR CONDITIONS OF ANY KIND, either express or implied.</span></div>
<div class="t ln" style="left:-12.5px;top:71px">12</div>
<div class="t code" style="left:40px;top:71px;color:#000"><span class="c">// See the License for the specific language governing permissions and</span></div>
<div class="t ln" style="left:-12.5px;top:88px">13</div>
<div class="t code" style="left:40px;top:88px;color:#000"><span class="c">// limitations under the License.</span></div>
<div class="t ln" style="left:-12.5px;top:105px">14</div>
<div class="t code" style="left:40px;top:105px;color:#000"></div>
<div class="t ln" style="left:-12.5px;top:122px">15</div>
<div class="t code" style="left:40px;top:122px;color:#000"><span class="k">#include</span> <span class="s">&lt;chrono&gt;</span></div>
<div class="t ln" style="left:-12.5px;top:139px">16</div>
<div class="t code" style="left:40px;top:139px;color:#000"><span class="k">#include</span> <span class="s">&lt;functional&gt;</span></div>
<div class="t ln" style="left:-12.5px;top:156px">17</div>
<div class="t code" style="left:40px;top:156px;color:#000"><span class="k">#include</span> <span class="s">&lt;memory&gt;</span></div>
<div class="t ln" style="left:-12.5px;top:173px">18</div>
<div class="t code" style="left:40px;top:173px;color:#000"><span class="k">#include</span> <span class="s">&lt;string&gt;</span></div>
<div class="t ln" style="left:-12.5px;top:190px">19</div>
<div class="t code" style="left:40px;top:190px;color:#000"></div>
<div class="t ln" style="left:-12.5px;top:207px">20</div>
<div class="t code" style="left:40px;top:207px;color:#000"><span class="k sqy">#include</span><span class="sqy"> </span><span class="s sqy">"rclcpp/rclcpp.hpp"</span></div>
<div class="t ln" style="left:-12.5px;top:224px">21</div>
<div class="t code" style="left:40px;top:224px;color:#000"><span class="k sqy">#include</span><span class="sqy"> </span><span class="s sqy">"std_msgs/msg/string.hpp"</span></div>
<div class="t ln" style="left:-12.5px;top:241px">22</div>
<div class="t code" style="left:40px;top:241px;color:#000"></div>
<div class="t ln" style="left:-12.5px;top:258px">23</div>
<div class="t code" style="left:40px;top:258px;color:#000"><span class="k">using</span> <span class="k">namespace</span> std::chrono_literals;</div>
<div class="t ln" style="left:-12.5px;top:275px">24</div>
<div class="t code" style="left:40px;top:275px;color:#000"></div>
<div class="t ln" style="left:-12.5px;top:292px">25</div>
<div class="t code" style="left:40px;top:292px;color:#000"><span class="c">/* This example creates a subclass of Node and uses </span><span class="c sq">std</span><span class="c">::bind() to register a</span></div>
<div class="t ln" style="left:-12.5px;top:309px">26</div>
<div class="t code" style="left:40px;top:309px;color:#000"><span class="c"> * member function as a callback from the timer. */</span></div>
<div class="t ln" style="left:-12.5px;top:326px">27</div>
<div class="t code" style="left:40px;top:326px;color:#000"></div>
<div class="t ln" style="left:-12.5px;top:343px">28</div>
<div class="t code" style="left:40px;top:343px;color:#000"><span class="k">class</span> <span class="cl">MinimalPublisher</span> : <span class="k">public</span> <span class="sq">rclcpp::Node</span></div>
<div class="t ln" style="left:-12.5px;top:360px">29</div>
<div class="t code" style="left:40px;top:360px;color:#000">{</div>
<div class="t ln" style="left:-12.5px;top:377px">30</div>
<div class="t code" style="left:40px;top:377px;color:#000"><span class="k">public</span>:</div>
<div class="t ln" style="left:-12.5px;top:394px">31</div>
<div class="t code" style="left:40px;top:394px;color:#000">  <span style="font-weight:bold">MinimalPublisher</span>()</div>
<div class="t ln" style="left:-12.5px;top:411px">32</div>
<div class="t code" style="left:40px;top:411px;color:#000">  : <span class="sq">Node</span>(<span class="s">"minimal_publisher"</span>), <span class="f">count_</span>(0)</div>
<div class="t ln" style="left:-12.5px;top:428px">33</div>
<div class="t code" style="left:40px;top:428px;color:#000">  {</div>
<div class="t ln" style="left:-12.5px;top:445px">34</div>
<div class="t code" style="left:40px;top:445px;color:#000">    <span class="f">publisher_</span> = <span class="k">this</span>-&gt;<span class="sq">create_publisher&lt;std_msgs::msg::String&gt;</span>(<span class="s">"topic"</span>, 10);</div>
</div>
<svg class="a" style="left:1124.0px;top:20.0px" width="16" height="16" viewBox="0 0 16 16"><path d="M4 8.5h8" stroke="#505050" stroke-width="1.3"/></svg>
<svg class="a" style="left:1158.0px;top:17.5px" width="16" height="16" viewBox="0 0 16 16"><rect x="4.5" y="4.5" width="7.5" height="7.5" fill="none" stroke="#505050" stroke-width="1.2"/></svg>
<svg class="a" style="left:1192.0px;top:18.0px" width="16" height="16" viewBox="0 0 16 16"><path d="M4 4l8 8M12 4l-8 8" stroke="#505050" stroke-width="1.2"/></svg>
<svg class="a" style="left:15px;top:147px" width="16" height="16" viewBox="0 0 16 16"><path d="M1.5 1.5h6l2 2v7h-8z" fill="#f4f8fc" stroke="#9a9080"/><path d="M3 4h4M3 6h4" stroke="#8090b0"/><path d="M5.5 8.5h3l1 1.2h5.5v5.8h-9.5z" fill="#f5d070" stroke="#b8873a"/></svg>
<svg class="a" style="left:152.8px;top:151.4px" width="10" height="10" viewBox="0 0 10 10"><path d="M1 1L9 9M9 1L1 9" stroke="#4a4a4a" stroke-width="1.2"/></svg>
<svg class="a" style="left:233.5px;top:147.0px" width="16" height="16" viewBox="0 0 16 16"><rect x="1.5" y="1.5" width="10" height="10" fill="#d8e8f8" stroke="#8aa8d0"/><rect x="3.5" y="3.5" width="10" height="10" fill="#eaf4fc" stroke="#6a90c0"/><path d="M5.5 8.5h6" stroke="#1a4a8a" stroke-width="1.5"/></svg>
<svg class="a" style="left:260.0px;top:147.0px" width="16" height="16" viewBox="0 0 16 16"><path d="M1 5l4-4v2.5h6v3h-6v2.5z" fill="#fff0c0" stroke="#c89020" stroke-width="1.1"/><path d="M15.5 11l-4-4v2.5h-6v3h6v2.5z" fill="#fff0c0" stroke="#c89020" stroke-width="1.1"/></svg>
<svg class="a" style="left:286.5px;top:147.0px" width="16" height="16" viewBox="0 0 16 16"><path d="M1.5 1.5h13l-4.5 5.5v7.5l-3 1v-8.5z" fill="#d8ecfa" stroke="#7a9ac8" stroke-width="1"/></svg>
<svg class="a" style="left:321.5px;top:147.0px" width="16" height="16" viewBox="0 0 16 16"><circle cx="8" cy="2.8" r="1.8" fill="#fff" stroke="#555" stroke-width="1"/><circle cx="8" cy="8" r="1.8" fill="#fff" stroke="#555" stroke-width="1"/><circle cx="8" cy="13.2" r="1.8" fill="#fff" stroke="#555" stroke-width="1"/></svg>
<svg class="a" style="left:358px;top:150px" width="10" height="4" viewBox="0 0 10 4"><rect x="0.6" y="0.6" width="8.8" height="2.8" fill="#fff" stroke="#333" stroke-width="1.2"/></svg>
<svg class="a" style="left:385px;top:150px" width="10" height="10" viewBox="0 0 10 10"><rect x="0.6" y="0.6" width="8.8" height="8.8" fill="#f4f4f4" stroke="#333" stroke-width="1.2"/><path d="M1 2.5h8" stroke="#333" stroke-width="1"/></svg>
<svg class="a" style="left:421px;top:147.5px" width="16" height="16" viewBox="0 0 16 16"><path d="M2.5 1.5h7l3 3v10h-10z" fill="#f4f8fc" stroke="#8a8060"/><path d="M9.5 1.5v3h3" fill="#e8dcc0" stroke="#c0a878"/><text x="5" y="12" font-family="Liberation Sans" font-weight="bold" font-size="9" fill="#2a5aa8">c</text><rect x="3" y="10.5" width="1.5" height="1.5" fill="#2a5aa8"/></svg>
<svg class="a" style="left:536.2px;top:151.4px" width="10" height="10" viewBox="0 0 10 10"><path d="M1 1L9 9M9 1L1 9" stroke="#2a2a2a" stroke-width="1.3"/></svg>
<svg class="a" style="left:1131px;top:150px" width="10" height="4" viewBox="0 0 10 4"><rect x="0.6" y="0.6" width="8.8" height="2.8" fill="#fff" stroke="#333" stroke-width="1.2"/></svg>
<svg class="a" style="left:1158px;top:150px" width="10" height="10" viewBox="0 0 10 10"><rect x="0.6" y="0.6" width="8.8" height="8.8" fill="#f4f4f4" stroke="#333" stroke-width="1.2"/><path d="M1 2.5h8" stroke="#333" stroke-width="1"/></svg>
<div class="a" style="left:1194px;top:140px;width:2px;height:2px;background:#9a9080"></div><div class="a" style="left:1198px;top:140px;width:2px;height:2px;background:#9a9080"></div><div class="a" style="left:1202px;top:140px;width:2px;height:2px;background:#9a9080"></div><div class="a" style="left:1206px;top:140px;width:2px;height:2px;background:#9a9080"></div>
<svg class="a" style="left:1193.0px;top:150.0px" width="16" height="16" viewBox="0 0 16 16"><rect x="6.5" y="3.5" width="7" height="5" fill="#f6f5f4" stroke="#8a7a68" stroke-width="1.3"/><rect x="3.5" y="6.5" width="7" height="5" fill="#f6f5f4" stroke="#8a7a68" stroke-width="1.3"/></svg>
<svg class="a" style="left:1193.0px;top:177.5px" width="16" height="16" viewBox="0 0 16 16"><rect x="1.5" y="1.5" width="5" height="5" fill="#cfe4f8" stroke="#2a70c0" stroke-width="1.3"/><rect x="1.5" y="9.5" width="5" height="5" fill="#cfe4f8" stroke="#2a70c0" stroke-width="1.3"/><path d="M9 4h5M12 8h3M9 12h5" stroke="#2a70c0" stroke-width="1.3"/><rect x="9" y="7" width="2" height="2" fill="none" stroke="#2a70c0"/></svg>
<svg class="a" style="left:1193.5px;top:203.0px" width="16" height="16" viewBox="0 0 16 16"><circle cx="8" cy="8" r="6.3" fill="#fff" stroke="#2a9050" stroke-width="1.3"/><circle cx="8" cy="8" r="3.8" fill="#e0f4e8" stroke="#2a9050" stroke-width="1.3"/><circle cx="8" cy="8" r="1.8" fill="#1a6030"/></svg>
<div class="a" style="left:1194px;top:230px;width:2px;height:2px;background:#9a9080"></div><div class="a" style="left:1198px;top:230px;width:2px;height:2px;background:#9a9080"></div><div class="a" style="left:1202px;top:230px;width:2px;height:2px;background:#9a9080"></div><div class="a" style="left:1206px;top:230px;width:2px;height:2px;background:#9a9080"></div>
<svg class="a" style="left:1193.0px;top:240.0px" width="16" height="16" viewBox="0 0 16 16"><rect x="6.5" y="3.5" width="7" height="5" fill="#f6f5f4" stroke="#8a7a68" stroke-width="1.3"/><rect x="3.5" y="6.5" width="7" height="5" fill="#f6f5f4" stroke="#8a7a68" stroke-width="1.3"/></svg>
<svg class="a" style="left:1193.0px;top:266.5px" width="16" height="16" viewBox="0 0 16 16"><path d="M9.5 1.5h3a2.5 2.5 0 0 1 2.5 2.5v9.5l0.5 1.5h-6z" fill="#eef2f8" stroke="#8a9ab8"/><path d="M11.5 4v9" stroke="#c0c8d8"/><rect x="1.5" y="1.5" width="9" height="8" fill="#fbeef0" stroke="#e0a0a8"/><circle cx="7" cy="5" r="2.5" fill="#e02030"/><rect x="1" y="8" width="7.5" height="7.5" fill="#d9314a"/><path d="M2.8 9.8l3.8 3.8M6.6 9.8l-3.8 3.8" stroke="#fff" stroke-width="1.2"/></svg>
<svg class="a" style="left:1193.5px;top:293.5px" width="16" height="16" viewBox="0 0 16 16"><rect x="2.5" y="3.5" width="12" height="12" rx="1" fill="#f0e0b0" stroke="#a08050"/><rect x="4.5" y="5.5" width="8" height="8" fill="#fff"/><rect x="6" y="1.5" width="5" height="3" fill="#c8c0b0" stroke="#807060"/><path d="M8 8h3.5M8 10h3.5M8 12h3.5" stroke="#5a7ab0"/><path d="M1 10l2.5 3 4.5-6" fill="none" stroke="#2a7ad0" stroke-width="1.8"/></svg>
<svg class="a" style="left:1193.5px;top:320.5px" width="16" height="16" viewBox="0 0 16 16"><rect x="1.5" y="2" width="13" height="9.5" rx="1.5" fill="#f0f6ff" stroke="#2a5ab0" stroke-width="1.6"/><path d="M4 5h6M4 7.5h4" stroke="#2a5ab0" stroke-width="1.2"/><path d="M6 13.5h4M3.5 14.5h9" stroke="#2a5ab0" stroke-width="1.6"/></svg>
<svg class="a" style="left:1193.5px;top:347.5px" width="16" height="16" viewBox="0 0 16 16"><rect x="1.5" y="2.5" width="13" height="11" fill="#f4f8fc" stroke="#6a7ab0"/><rect x="2" y="3" width="12" height="2.5" fill="#9ab0d8"/><path d="M1.5 7.5h13M1.5 9.5h13M1.5 11.5h13M5.5 5.5v8" stroke="#8a9ac8" stroke-width="0.8"/></svg>
<svg class="a" style="left:1193.5px;top:374.0px" width="16" height="16" viewBox="0 0 16 16"><text x="0.3" y="8" font-family="Liberation Sans" font-weight="bold" font-size="8" fill="#1a2a6a" letter-spacing="-0.5">1010</text><text x="0.3" y="13.8" font-family="Liberation Sans" font-weight="bold" font-size="8" fill="#1a2a6a" letter-spacing="-0.5">0101</text></svg>
<div class="a" style="left:453px;top:172px;width:1px;height:458px;background:#f0eeec"></div>
<svg class="a" style="left:416px;top:377.5px" width="12" height="14" viewBox="0 0 12 14"><defs><linearGradient id="qg" x1="0" y1="0" x2="0" y2="1"><stop offset="0" stop-color="#fde8a0"/><stop offset="0.5" stop-color="#f8c050"/><stop offset="1" stop-color="#f0a830"/></linearGradient></defs><rect x="0.5" y="0.5" width="11" height="13" fill="url(#qg)" stroke="#d89030"/><text x="2.3" y="11" font-family="Liberation Sans" font-weight="bold" font-size="11" fill="#2a5aa0">?</text></svg>
<svg class="a" style="left:416px;top:394.5px" width="12" height="14" viewBox="0 0 12 14"><defs><linearGradient id="qg" x1="0" y1="0" x2="0" y2="1"><stop offset="0" stop-color="#fde8a0"/><stop offset="0.5" stop-color="#f8c050"/><stop offset="1" stop-color="#f0a830"/></linearGradient></defs><rect x="0.5" y="0.5" width="11" height="13" fill="url(#qg)" stroke="#d89030"/><text x="2.3" y="11" font-family="Liberation Sans" font-weight="bold" font-size="11" fill="#2a5aa0">?</text></svg>
<svg class="a" style="left:416px;top:514.5px" width="13" height="14" viewBox="0 0 13 14"><rect x="0.5" y="0.5" width="5.5" height="6.5" rx="1" fill="#fdf0c0" stroke="#f0c040" stroke-width="1"/><path d="M3.5 6l-2.5-0.5M3.5 9.5l-3 1M5 12l-1.5 1.5M8.5 13.5v1.5M11.5 12l0.8 1.5M11.5 6.5l1-0.8M8.5 3.5l2-2M6 3l-0.5-1.5" stroke="#a82424" stroke-width="1"/><ellipse cx="7.5" cy="8.5" rx="3.3" ry="4.3" transform="rotate(-40 7.5 8.5)" fill="#f0b8b8" stroke="#b03030" stroke-width="1"/><path d="M5.5 10.8l4.3-4.3" stroke="#c86060" stroke-width="0.7"/><circle cx="4.8" cy="5.3" r="1.4" fill="#a82424"/></svg>
<svg class="a" style="left:416px;top:582.5px" width="13" height="14" viewBox="0 0 13 14"><rect x="0.5" y="0.5" width="5.5" height="6.5" rx="1" fill="#fdf0c0" stroke="#f0c040" stroke-width="1"/><path d="M3.5 6l-2.5-0.5M3.5 9.5l-3 1M5 12l-1.5 1.5M8.5 13.5v1.5M11.5 12l0.8 1.5M11.5 6.5l1-0.8M8.5 3.5l2-2M6 3l-0.5-1.5" stroke="#a82424" stroke-width="1"/><ellipse cx="7.5" cy="8.5" rx="3.3" ry="4.3" transform="rotate(-40 7.5 8.5)" fill="#f0b8b8" stroke="#b03030" stroke-width="1"/><path d="M5.5 10.8l4.3-4.3" stroke="#c86060" stroke-width="0.7"/><circle cx="4.8" cy="5.3" r="1.4" fill="#a82424"/></svg>
<svg class="a" style="left:416px;top:616.5px" width="13" height="14" viewBox="0 0 13 14"><rect x="0.5" y="0.5" width="5.5" height="6.5" rx="1" fill="#fdf0c0" stroke="#f0c040" stroke-width="1"/><path d="M3.5 6l-2.5-0.5M3.5 9.5l-3 1M5 12l-1.5 1.5M8.5 13.5v1.5M11.5 12l0.8 1.5M11.5 6.5l1-0.8M8.5 3.5l2-2M6 3l-0.5-1.5" stroke="#a82424" stroke-width="1"/><ellipse cx="7.5" cy="8.5" rx="3.3" ry="4.3" transform="rotate(-40 7.5 8.5)" fill="#f0b8b8" stroke="#b03030" stroke-width="1"/><path d="M5.5 10.8l4.3-4.3" stroke="#c86060" stroke-width="0.7"/><circle cx="4.8" cy="5.3" r="1.4" fill="#a82424"/></svg>
<svg class="a" style="left:443.3px;top:464.5px" width="10" height="10" viewBox="0 0 10 10"><defs><radialGradient id="fg" cx="0.5" cy="0.35" r="0.7"><stop offset="0" stop-color="#f4f8fc"/><stop offset="1" stop-color="#c8d4e4"/></radialGradient></defs><circle cx="5" cy="5" r="4.2" fill="url(#fg)" stroke="#a8b4c8" stroke-width="0.9"/><path d="M2.6 5h4.8" stroke="#2a3a6a" stroke-width="1.3"/></svg>
<svg class="a" style="left:443.3px;top:515.5px" width="10" height="10" viewBox="0 0 10 10"><defs><radialGradient id="fg" cx="0.5" cy="0.35" r="0.7"><stop offset="0" stop-color="#f4f8fc"/><stop offset="1" stop-color="#c8d4e4"/></radialGradient></defs><circle cx="5" cy="5" r="4.2" fill="url(#fg)" stroke="#a8b4c8" stroke-width="0.9"/><path d="M2.6 5h4.8" stroke="#2a3a6a" stroke-width="1.3"/></svg>
<svg class="a" style="left:443.3px;top:566.5px" width="10" height="10" viewBox="0 0 10 10"><defs><radialGradient id="fg" cx="0.5" cy="0.35" r="0.7"><stop offset="0" stop-color="#f4f8fc"/><stop offset="1" stop-color="#c8d4e4"/></radialGradient></defs><circle cx="5" cy="5" r="4.2" fill="url(#fg)" stroke="#a8b4c8" stroke-width="0.9"/><path d="M2.6 5h4.8" stroke="#2a3a6a" stroke-width="1.3"/></svg>
<svg class="a" style="left:1172px;top:322px" width="10" height="5" viewBox="0 0 10 5"><rect x="0.5" y="0.5" width="9" height="4" fill="#fde8b0" stroke="#f0b030" stroke-width="1"/></svg>
<svg class="a" style="left:1172px;top:329px" width="10" height="5" viewBox="0 0 10 5"><rect x="0.5" y="0.5" width="9" height="4" fill="#fde8b0" stroke="#f0b030" stroke-width="1"/></svg>
<svg class="a" style="left:1172px;top:383px" width="10" height="5" viewBox="0 0 10 5"><rect x="0.5" y="0.5" width="9" height="4" fill="#fbd8d8" stroke="#e02030" stroke-width="1"/></svg>
<svg class="a" style="left:1172px;top:413px" width="10" height="5" viewBox="0 0 10 5"><rect x="0.5" y="0.5" width="9" height="4" fill="#fbd8d8" stroke="#e02030" stroke-width="1"/></svg>
<svg class="a" style="left:1172px;top:428px" width="10" height="5" viewBox="0 0 10 5"><rect x="0.5" y="0.5" width="9" height="4" fill="#fbd8d8" stroke="#e02030" stroke-width="1"/></svg>
<svg class="a" style="left:1172px;top:436px" width="10" height="5" viewBox="0 0 10 5"><rect x="0.5" y="0.5" width="9" height="4" fill="#fbd8d8" stroke="#e02030" stroke-width="1"/></svg>
<svg class="a" style="left:1172px;top:489px" width="10" height="5" viewBox="0 0 10 5"><rect x="0.5" y="0.5" width="9" height="4" fill="#fbd8d8" stroke="#e02030" stroke-width="1"/></svg>
<svg class="a" style="left:1172px;top:497px" width="10" height="5" viewBox="0 0 10 5"><rect x="0.5" y="0.5" width="9" height="4" fill="#fbd8d8" stroke="#e02030" stroke-width="1"/></svg>
<svg class="a" style="left:1172px;top:505px" width="10" height="5" viewBox="0 0 10 5"><rect x="0.5" y="0.5" width="9" height="4" fill="#fbd8d8" stroke="#e02030" stroke-width="1"/></svg>
<svg class="a" style="left:1172px;top:512px" width="10" height="5" viewBox="0 0 10 5"><rect x="0.5" y="0.5" width="9" height="4" fill="#fbd8d8" stroke="#e02030" stroke-width="1"/></svg>
<svg class="a" style="left:1172px;top:528px" width="10" height="5" viewBox="0 0 10 5"><rect x="0.5" y="0.5" width="9" height="4" fill="#fbd8d8" stroke="#e02030" stroke-width="1"/></svg>
<svg class="a" style="left:1172px;top:535px" width="10" height="5" viewBox="0 0 10 5"><rect x="0.5" y="0.5" width="9" height="4" fill="#fbd8d8" stroke="#e02030" stroke-width="1"/></svg>
<svg class="a" style="left:1172px;top:580px" width="10" height="5" viewBox="0 0 10 5"><rect x="0.5" y="0.5" width="9" height="4" fill="#fbd8d8" stroke="#e02030" stroke-width="1"/></svg>
<svg class="a" style="left:1172px;top:588px" width="10" height="5" viewBox="0 0 10 5"><rect x="0.5" y="0.5" width="9" height="4" fill="#fbd8d8" stroke="#e02030" stroke-width="1"/></svg>
<svg class="a" style="left:1172px;top:596px" width="10" height="5" viewBox="0 0 10 5"><rect x="0.5" y="0.5" width="9" height="4" fill="#fbd8d8" stroke="#e02030" stroke-width="1"/></svg>
<div class="dots" style="left:1052px;top:639px"></div>
<svg class="a" style="left:1069.0px;top:639.0px" width="16" height="16" viewBox="0 0 16 16"><path d="M8 13.5v-7c0-3 2-4.5 4-4.5s2.5 1.5 2.5 4v7.5z" fill="#e8c060" stroke="#a08030"/><path d="M1.5 8l3-3v1.5h4v3h-4v1.5z" fill="#f0f0f0" stroke="#808080"/></svg>
<div class="vsep" style="left:1097px;top:634px;height:26px"></div>
<svg class="a" style="left:1110.0px;top:639.0px" width="16" height="16" viewBox="0 0 16 16"><path d="M1.5 3.5l4-1.5 5 1.5 4-1.5v11l-4 1.5-5-1.5-4 1.5z" fill="#fff4e0" stroke="#f08a20" stroke-width="1.3"/><path d="M5.5 2v11M10.5 3.5v11" stroke="#f08a20" stroke-width="1.2"/></svg>
<svg class="a" style="left:1137.0px;top:639.0px" width="16" height="16" viewBox="0 0 16 16"><path d="M0.5 6.5l7.5-3 7.5 3-7.5 3z" fill="#f08a20"/><path d="M3.5 8v3.5c2 2 7 2 9 0v-3.5l-4.5 2z" fill="#f08a20"/><path d="M2 7v5" stroke="#f08a20" stroke-width="1.2"/></svg>
<svg class="a" style="left:1164.0px;top:639.0px" width="16" height="16" viewBox="0 0 16 16"><path d="M2 14.5l10-10" stroke="#f08a20" stroke-width="2.8" stroke-linecap="round"/><path d="M11 5.5l2-2" stroke="#fbd0a0" stroke-width="1"/><circle cx="6" cy="2.5" r="0.8" fill="#f08a20"/><circle cx="14" cy="8" r="0.8" fill="#f08a20"/><circle cx="9" cy="1" r="0.6" fill="#f08a20"/></svg>
<svg class="a" style="left:1191.0px;top:639.0px" width="16" height="16" viewBox="0 0 16 16"><circle cx="8" cy="8" r="6.2" fill="#fff" stroke="#f08a20" stroke-width="1.3"/><path d="M8 3.5l1.3 2.8 3 .3-2.3 2 .7 3-2.7-1.6-2.7 1.6.7-3-2.3-2 3-.3z" fill="none" stroke="#f08a20" stroke-width="0.9"/></svg>
</body></html>
